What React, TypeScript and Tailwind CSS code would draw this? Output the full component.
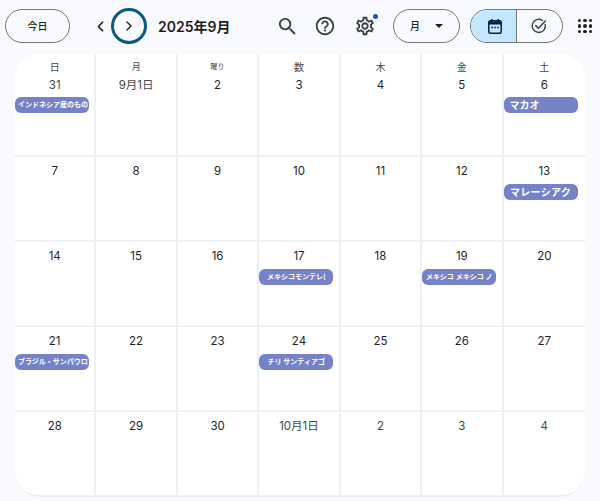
import { ChevronLeft, ChevronRight } from 'lucide-react';
import { MdSearch, MdHelpOutline, MdOutlineSettings } from 'react-icons/md';

const font = 'font-["Inter","Noto_Sans_CJK_JP",sans-serif]';

type Cell = { label: string; muted?: boolean; chip?: string; chipLarge?: boolean };

const weekdays = ['日', '月', '曜り', '数', '木', '金', '土'];

const rows: Cell[][] = [
  [
    { label: '31', muted: true, chip: 'インドネシア産のもの' },
    { label: '9月1日', muted: true },
    { label: '2' },
    { label: '3' },
    { label: '4' },
    { label: '5' },
    { label: '6', chip: 'マカオ', chipLarge: true },
  ],
  [
    { label: '7' },
    { label: '8' },
    { label: '9' },
    { label: '10' },
    { label: '11' },
    { label: '12' },
    { label: '13', chip: 'マレーシアク', chipLarge: true },
  ],
  [
    { label: '14' },
    { label: '15' },
    { label: '16' },
    { label: '17', chip: 'メキシコモンテレ(' },
    { label: '18' },
    { label: '19', chip: 'メキシコ メキシコ ノ' },
    { label: '20' },
  ],
  [
    { label: '21', chip: 'ブラジル・サンパウロ' },
    { label: '22' },
    { label: '23' },
    { label: '24', chip: 'チリ サンティアゴ' },
    { label: '25' },
    { label: '26' },
    { label: '27' },
  ],
  [
    { label: '28' },
    { label: '29' },
    { label: '30' },
    { label: '10月1日', muted: true },
    { label: '2', muted: true },
    { label: '3', muted: true },
    { label: '4', muted: true },
  ],
];

function AppsIcon() {
  return (
    <div className="grid grid-cols-3 gap-[2px] w-[14px]">
      {Array.from({ length: 9 }).map((_, i) => (
        <div key={i} className="w-[3.4px] h-[3.4px] rounded-full bg-[#1f1f1f]" />
      ))}
    </div>
  );
}

function CalendarIcon() {
  return (
    <svg width="16" height="17" viewBox="0 0 16 17" fill="none" className="text-[#041e49]">
      <rect x="1.8" y="2.8" width="12.4" height="12.4" rx="1.5" stroke="currentColor" strokeWidth="1.5" />
      <path d="M2 3.2h12v3.2H2z" fill="currentColor" />
      <path d="M4.8 1v2.5M11.2 1v2.5" stroke="currentColor" strokeWidth="1.4" />
      <path d="M4.3 9.5h1.6M7.2 9.5h1.6M10.1 9.5h1.6" stroke="currentColor" strokeWidth="1.4" />
    </svg>
  );
}

function TaskIcon() {
  return (
    <svg width="18" height="18" viewBox="0 0 18 18" fill="none" className="text-[#3c4043]">
      <path d="M15.2 7.4A6.6 6.6 0 1 1 12.4 3.4" stroke="currentColor" strokeWidth="1.4" strokeLinecap="round" />
      <path d="M5.8 8.6l2.6 2.6 7-7.2" stroke="currentColor" strokeWidth="1.5" strokeLinecap="round" strokeLinejoin="round" />
    </svg>
  );
}

function DayCell({ cell, top, col }: { cell: Cell; top?: string; col: number }) {
  return (
    <div className={`flex flex-col min-w-0 ${col < 6 ? 'border-r-2 border-[#eef0f3]' : ''}`}>
      {top && (
        <div className={`h-[24px] pt-[7px] text-center leading-[12px] text-[#444746] ${top.length > 1 ? 'text-[7px]' : col === 1 ? 'text-[9px]' : 'text-[10px]'}`}>
          {top}
        </div>
      )}
      <div className={`text-center text-[11.5px] leading-[14px] ${top ? 'mt-0' : 'mt-[7px]'} ${cell.muted ? 'text-[#444746]' : 'text-[#1f1f1f]'}`}>
        {cell.label}
      </div>
      {cell.chip && (
        <div
          className={`w-[74px] h-4 shrink-0 rounded-md bg-[#7682c8] overflow-hidden whitespace-nowrap text-white font-semibold leading-4 ${
            top ? 'mt-[5px]' : 'mt-[6px]'
          } ${
            cell.chipLarge
              ? cell.chip === 'マカオ'
                ? 'text-[10px] pl-[6px]'
                : 'text-[10px] text-center tracking-[0.3px]'
              : 'text-[7px] text-center px-[3px]'
          }`}
        >
          {cell.chip}
        </div>
      )}
    </div>
  );
}

export default function App() {
  return (
    <div className={`w-[600px] h-[501px] bg-[#f8fafd] overflow-hidden ${font}`}>
      {/* ヘッダー */}
      <div className="h-[54px] flex items-center pl-[5px] pb-[2px]">
        <button className="w-[65px] h-[34px] rounded-full border border-[#747775] text-[10px] font-medium text-[#1f1f1f]">今日</button>
        <ChevronLeft size={17} strokeWidth={2.4} className="ml-[22px] text-[#1f1f1f]" />
        <div className="ml-[2px] w-9 h-9 rounded-full border-[3px] border-[#0b5a80] flex items-center justify-center">
          <ChevronRight size={16} strokeWidth={2} className="text-[#1f1f1f]" />
        </div>
        <div className="ml-[11px] w-[72px] whitespace-nowrap text-[14px] font-semibold text-[#1f1f1f]">2025年9月</div>
        <MdSearch size={23} className="ml-[46px] text-[#3c4043]" />
        <MdHelpOutline size={22} className="ml-[15px] text-[#3c4043]" />
        <div className="relative ml-[18px]">
          <MdOutlineSettings size={22} className="text-[#3c4043]" />
          <div className="absolute -top-[1px] right-[-2px] w-[5px] h-[5px] rounded-full bg-[#0b57d0]" />
        </div>
        <button className="ml-[17px] w-[67px] h-[34px] rounded-full border border-[#747775] flex items-center justify-center gap-[15px] text-[10px] font-medium text-[#1f1f1f]">
          月
          <span className="w-0 h-0 border-x-[4px] border-x-transparent border-t-[4px] border-t-[#1f1f1f]" />
        </button>
        <div className="ml-[10px] w-[93px] h-[34px] rounded-full border border-[#747775] flex overflow-hidden">
          <div className="w-[46px] bg-[#c2e7ff] border-r border-[#747775] flex items-center justify-center pl-[3px]">
            <CalendarIcon />
          </div>
          <div className="flex-1 flex items-center justify-center pr-[2px]">
            <TaskIcon />
          </div>
        </div>
        <div className="ml-[15px]">
          <AppsIcon />
        </div>
      </div>

      {/* カレンダー */}
      <div className="ml-[15px] w-[570px] h-[443px] bg-white rounded-[24px] overflow-hidden grid grid-cols-7 grid-rows-[103px_repeat(4,85px)] border-b-2 border-[#eef0f3]">
        {rows.map((row, r) =>
          row.map((cell, c) => (
            <div key={`${r}-${c}`} className={`grid ${r < 4 ? 'border-b-2 border-[#eef0f3]' : ''}`}>
              <DayCell cell={cell} col={c} top={r === 0 ? weekdays[c] : undefined} />
            </div>
          ))
        )}
      </div>
    </div>
  );
}
